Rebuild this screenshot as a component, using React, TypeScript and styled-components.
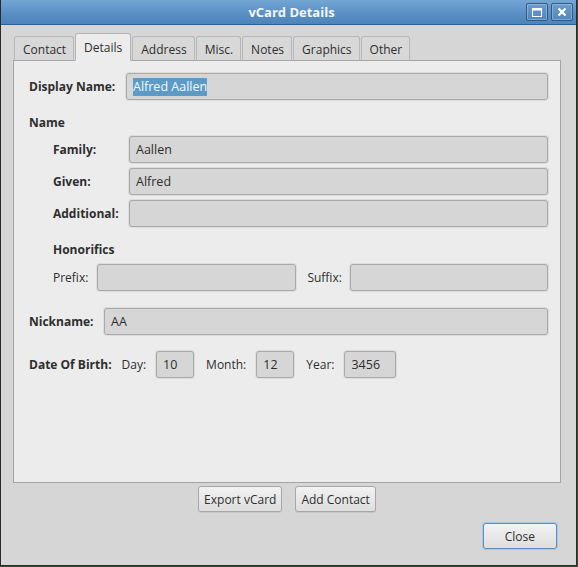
import React from "react";
import styled, { createGlobalStyle } from "styled-components";

const GlobalStyle = createGlobalStyle`
  html, body {
    margin: 0;
    padding: 0;
    background: #3d4a3a;
  }
  body {
    font-family: "Open Sans", "DejaVu Sans", sans-serif;
    font-size: 12px;
    color: #2e2e2e;
  }
`;

const tabs = ["Contact", "Details", "Address", "Misc.", "Notes", "Graphics", "Other"];

const Window = styled.div`
  width: 575px;
  height: 565px;
  display: flex;
  flex-direction: column;
  background: #d6d6d6;
  border: 1px solid #2a2a2a;
  border-top: none;
`;

const TitleBar = styled.div`
  height: 24px;
  display: flex;
  align-items: center;
  justify-content: center;
  position: relative;
  background: linear-gradient(#74a6d4, #5a90c4 55%, #4d84b9);
  border-bottom: 1px solid #2f5f8e;
  color: #f2f6fa;
  font-weight: bold;
  font-size: 13px;
  padding-left: 6px;
`;

const WinButtons = styled.div`
  position: absolute;
  right: 3px;
  top: 3px;
  display: flex;
  gap: 3px;
`;

const WinButton = styled.div`
  width: 22px;
  height: 18px;
  box-sizing: border-box;
  border: 1px solid #2d5a86;
  border-radius: 2px;
  background: linear-gradient(#6d9ccb, #5186bb);
  display: flex;
  align-items: center;
  justify-content: center;
  box-shadow: inset 0 0 0 1px rgba(255, 255, 255, 0.25);
`;

const Body = styled.div`
  flex: 1;
  display: flex;
  flex-direction: column;
  padding: 8px 15px 15px 12px;
`;

const TabBar = styled.div`
  display: flex;
  align-items: flex-end;
  gap: 1px;
  height: 28px;
  margin-bottom: -1px;
  padding-left: 1px;
  position: relative;
  z-index: 1;
`;

const Tab = styled.div<{ $active?: boolean }>`
  height: ${({ $active }) => ($active ? "28px" : "25px")};
  box-sizing: border-box;
  padding: 0 ${({ $active }) => ($active ? "8px" : "7px")} 0 8px;
  display: flex;
  align-items: center;
  padding-top: ${({ $active }) => ($active ? "0" : "1px")};
  background: ${({ $active }) => ($active ? "#ececec" : "#d8d8d8")};
  border: 1px solid ${({ $active }) => ($active ? "#b4b4b4" : "#b8b8b8")};
  border-bottom: ${({ $active }) => ($active ? "1px solid #ececec" : "1px solid #a6a6a6")};
  border-radius: 3px 3px 0 0;
  color: #2e2e2e;
  font-size: 12px;
`;

const Panel = styled.div`
  height: 423px;
  box-sizing: border-box;
  background: #ececec;
  border: 1px solid #a4a4a4;
  padding: 12px 12px 0 15px;
  display: flex;
  flex-direction: column;
`;

const Row = styled.div<{ $indent?: number; $top?: number }>`
  display: flex;
  align-items: center;
  margin-left: ${({ $indent }) => $indent ?? 0}px;
  margin-top: ${({ $top }) => $top ?? 0}px;
`;

const Label = styled.div<{ $bold?: boolean; $width?: number; $gap?: number; $lead?: number }>`
  font-weight: ${({ $bold }) => ($bold ? "bold" : "normal")};
  width: ${({ $width }) => ($width ? `${$width}px` : "auto")};
  margin-right: ${({ $gap }) => $gap ?? 0}px;
  margin-left: ${({ $lead }) => $lead ?? 0}px;
  flex-shrink: 0;
  white-space: nowrap;
`;

const Heading = styled.div<{ $indent?: number; $top: number; $bottom: number }>`
  font-weight: bold;
  margin-left: ${({ $indent }) => $indent ?? 0}px;
  margin-top: ${({ $top }) => $top}px;
  margin-bottom: ${({ $bottom }) => $bottom}px;
  line-height: 16px;
`;

const Field = styled.div<{ $width?: number }>`
  ${({ $width }) => ($width ? `width: ${$width}px;` : "flex: 1;")}
  flex-shrink: 0;
  height: 27px;
  box-sizing: border-box;
  background: #d6d6d6;
  border: 1px solid #a9a9a9;
  border-radius: 3px;
  box-shadow: 0 0 0 1px #dcdcdc;
  display: flex;
  align-items: center;
  padding-left: 6px;
  color: #2e2e2e;
  font-size: 12.5px;
`;

const Selected = styled.span`
  background: #5d9bc6;
  color: #f4f8fb;
  line-height: 18px;
`;

const ButtonRow = styled.div`
  display: flex;
  justify-content: center;
  gap: 13px;
  margin-top: 3px;
`;

const PushButton = styled.div<{ $focus?: boolean }>`
  height: 26px;
  box-sizing: border-box;
  padding: 0 ${({ $focus }) => ($focus ? "21px" : "5px")};
  display: flex;
  align-items: center;
  justify-content: center;
  background: linear-gradient(#f2f2f2, #dedede);
  border: 1px solid ${({ $focus }) => ($focus ? "#5b8fc0" : "#a6a6a6")};
  border-radius: 3px;
  box-shadow: ${({ $focus }) => ($focus ? "0 0 0 1px #a9c6e2" : "0 1px 0 #c6c6c6")};
  font-size: 12px;
  color: #2e2e2e;
`;

const Footer = styled.div`
  display: flex;
  justify-content: flex-end;
  margin-top: 11px;
  padding-right: 4px;
`;

const App: React.FC = () => {
  return (
    <>
      <GlobalStyle />
      <Window>
        <TitleBar>
          vCard Details
          <WinButtons>
            <WinButton>
              <svg width="10" height="9" viewBox="0 0 10 9">
                <rect x="0.5" y="0.5" width="9" height="8" fill="none" stroke="#ffffff" strokeWidth="1" />
                <rect x="0.5" y="0.5" width="9" height="2" fill="#ffffff" />
              </svg>
            </WinButton>
            <WinButton>
              <svg width="10" height="10" viewBox="0 0 10 10">
                <path d="M1.5 1.5 L8.5 8.5 M8.5 1.5 L1.5 8.5" stroke="#ffffff" strokeWidth="2.2" />
              </svg>
            </WinButton>
          </WinButtons>
        </TitleBar>
        <Body>
          <TabBar>
            {tabs.map((t) => (
              <Tab key={t} $active={t === "Details"}>
                {t}
              </Tab>
            ))}
          </TabBar>
          <Panel>
            <Row>
              <Label $bold $width={97}>Display Name:</Label>
              <Field>
                <Selected>Alfred Aallen</Selected>
              </Field>
            </Row>
            <Heading $top={15} $bottom={5}>Name</Heading>
            <Row $indent={24}>
              <Label $bold $width={76}>Family:</Label>
              <Field>Aallen</Field>
            </Row>
            <Row $indent={24} $top={5}>
              <Label $bold $width={76}>Given:</Label>
              <Field>Alfred</Field>
            </Row>
            <Row $indent={24} $top={5}>
              <Label $bold $width={76}>Additional:</Label>
              <Field />
            </Row>
            <Heading $indent={24} $top={15} $bottom={6}>Honorifics</Heading>
            <Row $indent={24}>
              <Label $gap={9}>Prefix:</Label>
              <Field $width={199} />
              <Label $gap={8} $lead={11}>Suffix:</Label>
              <Field />
            </Row>
            <Row $top={17}>
              <Label $bold $width={75}>Nickname:</Label>
              <Field>AA</Field>
            </Row>
            <Row $top={16}>
              <Label $bold $gap={10}>Date Of Birth:</Label>
              <Label $gap={10}>Day:</Label>
              <Field $width={38}>10</Field>
              <Label $gap={10} $lead={12}>Month:</Label>
              <Field $width={38}>12</Field>
              <Label $gap={10} $lead={12}>Year:</Label>
              <Field $width={52}>3456</Field>
            </Row>
          </Panel>
          <ButtonRow>
            <PushButton>Export vCard</PushButton>
            <PushButton>Add Contact</PushButton>
          </ButtonRow>
          <Footer>
            <PushButton $focus>Close</PushButton>
          </Footer>
        </Body>
      </Window>
    </>
  );
};

export default App;
